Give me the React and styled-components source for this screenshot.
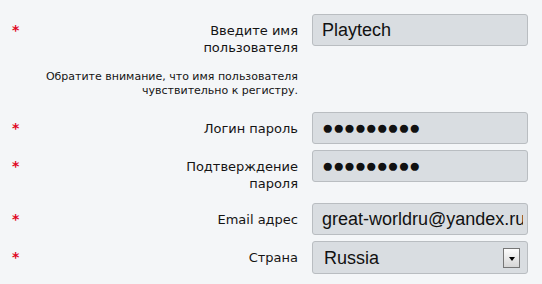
import React from 'react';
import styled, { createGlobalStyle } from 'styled-components';

const GlobalStyle = createGlobalStyle`
  html, body {
    margin: 0;
    padding: 0;
    background: #f4f6f8;
  }
`;

const Form = styled.form`
  display: flex;
  flex-direction: column;
  gap: 6px;
  width: 542px;
  height: 284px;
  box-sizing: border-box;
  padding: 14px 14px 0 12px;
  background: #f4f6f8;
  font-family: "DejaVu Sans", Verdana, sans-serif;
  color: #141414;
`;

const Row = styled.div`
  display: grid;
  grid-template-columns: 20px 1fr 216px;
  column-gap: 14px;
  align-items: start;
`;

const Star = styled.span`
  color: #e0061f;
  font-size: 14px;
  font-weight: bold;
  line-height: 17px;
  padding-top: 8px;
`;

const Label = styled.label`
  text-align: right;
  font-size: 13px;
  line-height: 17px;
  padding: 8px 0 5px;
`;

const Note = styled.div`
  grid-column: 1 / 3;
  text-align: right;
  font-size: 11px;
  line-height: 14px;
  padding: 3px 0 8px;
`;

const Field = styled.input`
  box-sizing: border-box;
  width: 216px;
  height: 32px;
  margin: 0;
  padding: 0 4px 0 9px;
  border: 1px solid #b9bdc1;
  border-radius: 3px;
  background: #d9dde1;
  color: #111;
  font-family: "Liberation Sans", Arial, sans-serif;
  font-size: ${p => (p.$dots ? 19 : 18)}px;
  letter-spacing: ${p => (p.$dots ? '-0.6px' : 'normal')};
  outline: none;
`;

const SelectBox = styled.div`
  box-sizing: border-box;
  display: flex;
  align-items: center;
  width: 216px;
  height: 33px;
  padding: 0 7px 0 0;
  border: 1px solid #b9bdc1;
  border-radius: 3px;
  background: #d9dde1;
`;

const Select = styled.select`
  flex: 1;
  appearance: none;
  border: none;
  background: transparent;
  padding: 0 0 0 11px;
  margin: 0;
  height: 100%;
  color: #111;
  font-family: "Liberation Sans", Arial, sans-serif;
  font-size: 18px;
  outline: none;
`;

const ArrowButton = styled.span`
  box-sizing: border-box;
  display: flex;
  align-items: center;
  justify-content: center;
  width: 17px;
  height: 20px;
  margin-top: 1px;
  border: 1px solid #767676;
  background: linear-gradient(#fdfdfd, #d6d6d6);

  &::after {
    content: '';
    margin-top: 2px;
    border-left: 3px solid transparent;
    border-right: 3px solid transparent;
    border-top: 4px solid #000;
  }
`;

export default function App() {
  return (
    <>
      <GlobalStyle />
      <Form onSubmit={e => e.preventDefault()}>
        <Row>
          <Star>*</Star>
          <Label>Введите имя<br />пользователя</Label>
          <Field defaultValue="Playtech" />
        </Row>
        <Row>
          <Note>Обратите внимание, что имя пользователя<br />чувствительно к регистру.</Note>
        </Row>
        <Row>
          <Star>*</Star>
          <Label>Логин пароль</Label>
          <Field $dots readOnly value="●●●●●●●●●" />
        </Row>
        <Row>
          <Star>*</Star>
          <Label>Подтверждение<br />пароля</Label>
          <Field $dots readOnly value="●●●●●●●●●" />
        </Row>
        <Row>
          <Star>*</Star>
          <Label>Email адрес</Label>
          <Field defaultValue="great-worldru@yandex.ru" />
        </Row>
        <Row>
          <Star>*</Star>
          <Label>Страна</Label>
          <SelectBox>
            <Select defaultValue="Russia">
              <option>Russia</option>
            </Select>
            <ArrowButton />
          </SelectBox>
        </Row>
      </Form>
    </>
  );
}
